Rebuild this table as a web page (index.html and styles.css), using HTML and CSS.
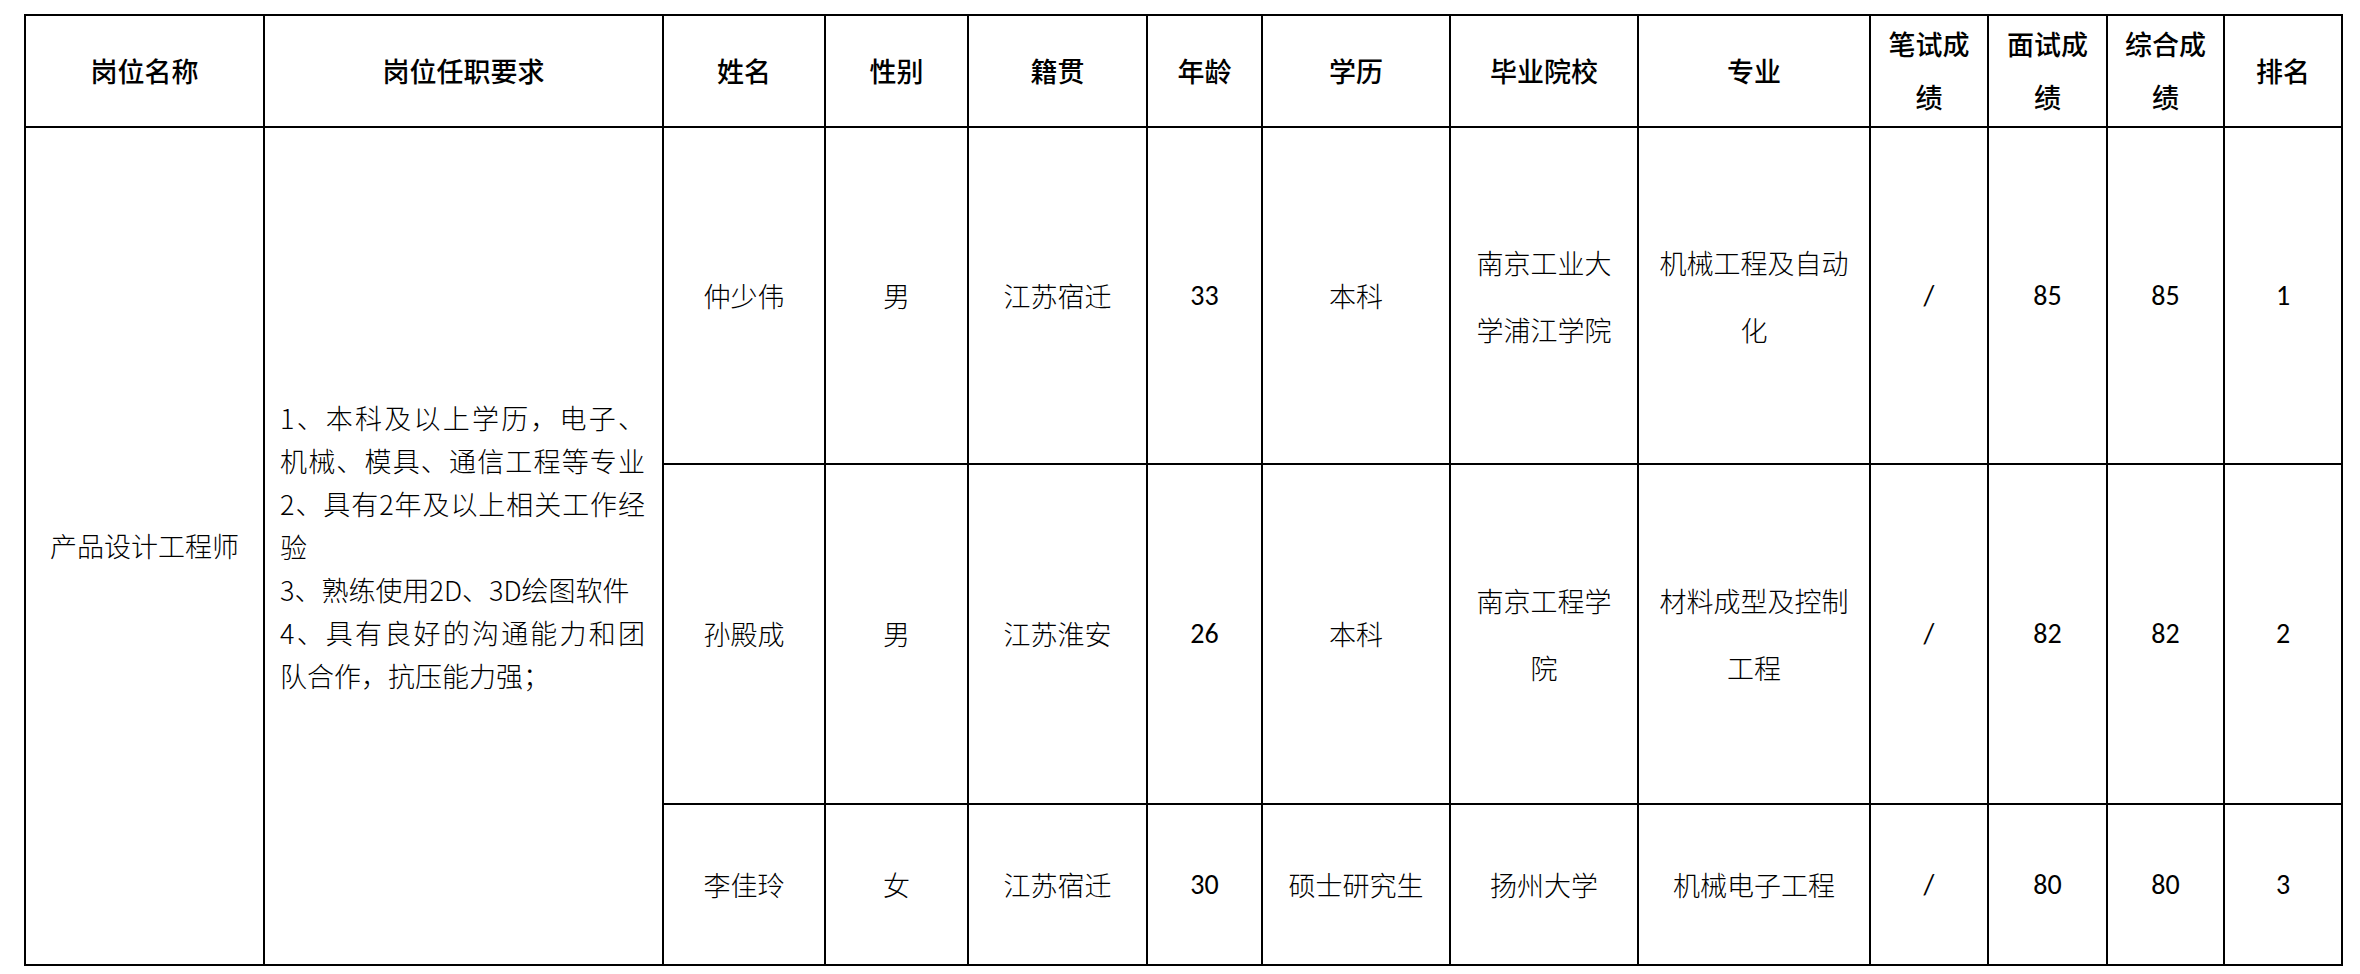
FILE: index.html
```html
<!DOCTYPE html>
<html lang="zh-CN">
<head>
<meta charset="utf-8">
<title>面试成绩</title>
<link rel="stylesheet" href="styles.css">
</head>
<body>
<div class="sheet">
  <div class="grid">
    <div class="cell h">岗位名称</div>
    <div class="cell h">岗位任职要求</div>
    <div class="cell h">姓名</div>
    <div class="cell h">性别</div>
    <div class="cell h">籍贯</div>
    <div class="cell h">年龄</div>
    <div class="cell h">学历</div>
    <div class="cell h">毕业院校</div>
    <div class="cell h">专业</div>
    <div class="cell h two">笔试成<br>绩</div>
    <div class="cell h two">面试成<br>绩</div>
    <div class="cell h two">综合成<br>绩</div>
    <div class="cell h">排名</div>

    <div class="cell span3">产品设计工程师</div>
    <div class="cell span3 req">
      <div class="req-text">
        <div class="ln just">1、本科及以上学历，电子、</div>
        <div class="ln just">机械、模具、通信工程等专业</div>
        <div class="ln just">2、具有2年及以上相关工作经</div>
        <div class="ln">验</div>
        <div class="ln">3、熟练使用2D、3D绘图软件</div>
        <div class="ln just">4、具有良好的沟通能力和团</div>
        <div class="ln">队合作，抗压能力强；</div>
      </div>
    </div>

    <div class="cell">仲少伟</div>
    <div class="cell">男</div>
    <div class="cell">江苏宿迁</div>
    <div class="cell num">33</div>
    <div class="cell">本科</div>
    <div class="cell multi">南京工业大<br>学浦江学院</div>
    <div class="cell multi">机械工程及自动<br>化</div>
    <div class="cell num">/</div>
    <div class="cell num">85</div>
    <div class="cell num">85</div>
    <div class="cell num">1</div>

    <div class="cell">孙殿成</div>
    <div class="cell">男</div>
    <div class="cell">江苏淮安</div>
    <div class="cell num">26</div>
    <div class="cell">本科</div>
    <div class="cell multi">南京工程学<br>院</div>
    <div class="cell multi">材料成型及控制<br>工程</div>
    <div class="cell num">/</div>
    <div class="cell num">82</div>
    <div class="cell num">82</div>
    <div class="cell num">2</div>

    <div class="cell">李佳玲</div>
    <div class="cell">女</div>
    <div class="cell">江苏宿迁</div>
    <div class="cell num">30</div>
    <div class="cell">硕士研究生</div>
    <div class="cell">扬州大学</div>
    <div class="cell">机械电子工程</div>
    <div class="cell num">/</div>
    <div class="cell num">80</div>
    <div class="cell num">80</div>
    <div class="cell num">3</div>
  </div>
</div>
</body>
</html>
```

FILE: styles.css
```css
html, body {
  margin: 0;
  padding: 0;
  background: #ffffff;
}

body {
  font-family: "Noto Sans CJK SC", "Noto Sans", sans-serif;
  font-size: 27px;
  font-weight: 300;
  color: #000000;
}

.sheet {
  padding: 14px 0 0 24px;
}

.grid {
  display: grid;
  width: max-content;
  background: #000000;
  padding: 2px;
  gap: 2px;
  grid-template-columns: 237px 397px 160px 141px 177px 113px 186px 186px 230px 116px 117px 115px 116px;
  grid-template-rows: 110px 335px 338px 159px;
}

.cell {
  background: #ffffff;
  display: flex;
  align-items: center;
  justify-content: center;
  text-align: center;
  line-height: 40px;
  white-space: nowrap;
  overflow: hidden;
}

.h {
  font-weight: 500;
}

.h.two {
  line-height: 53px;
  padding-bottom: 2px;
}

.multi {
  line-height: 67px;
}

.num {
  font-family: "Carlito", "Lato", "Liberation Sans", sans-serif;
  font-size: 28px;
  font-weight: 400;
}

.span3 {
  grid-row: span 3;
}

.req {
  justify-content: flex-start;
  padding-left: 15px;
}

.req-text {
  width: 365px;
  line-height: 43px;
  text-align: left;
}

.ln {
  white-space: nowrap;
}

.ln.just {
  text-align: justify;
  text-align-last: justify;
  white-space: normal;
}
```
